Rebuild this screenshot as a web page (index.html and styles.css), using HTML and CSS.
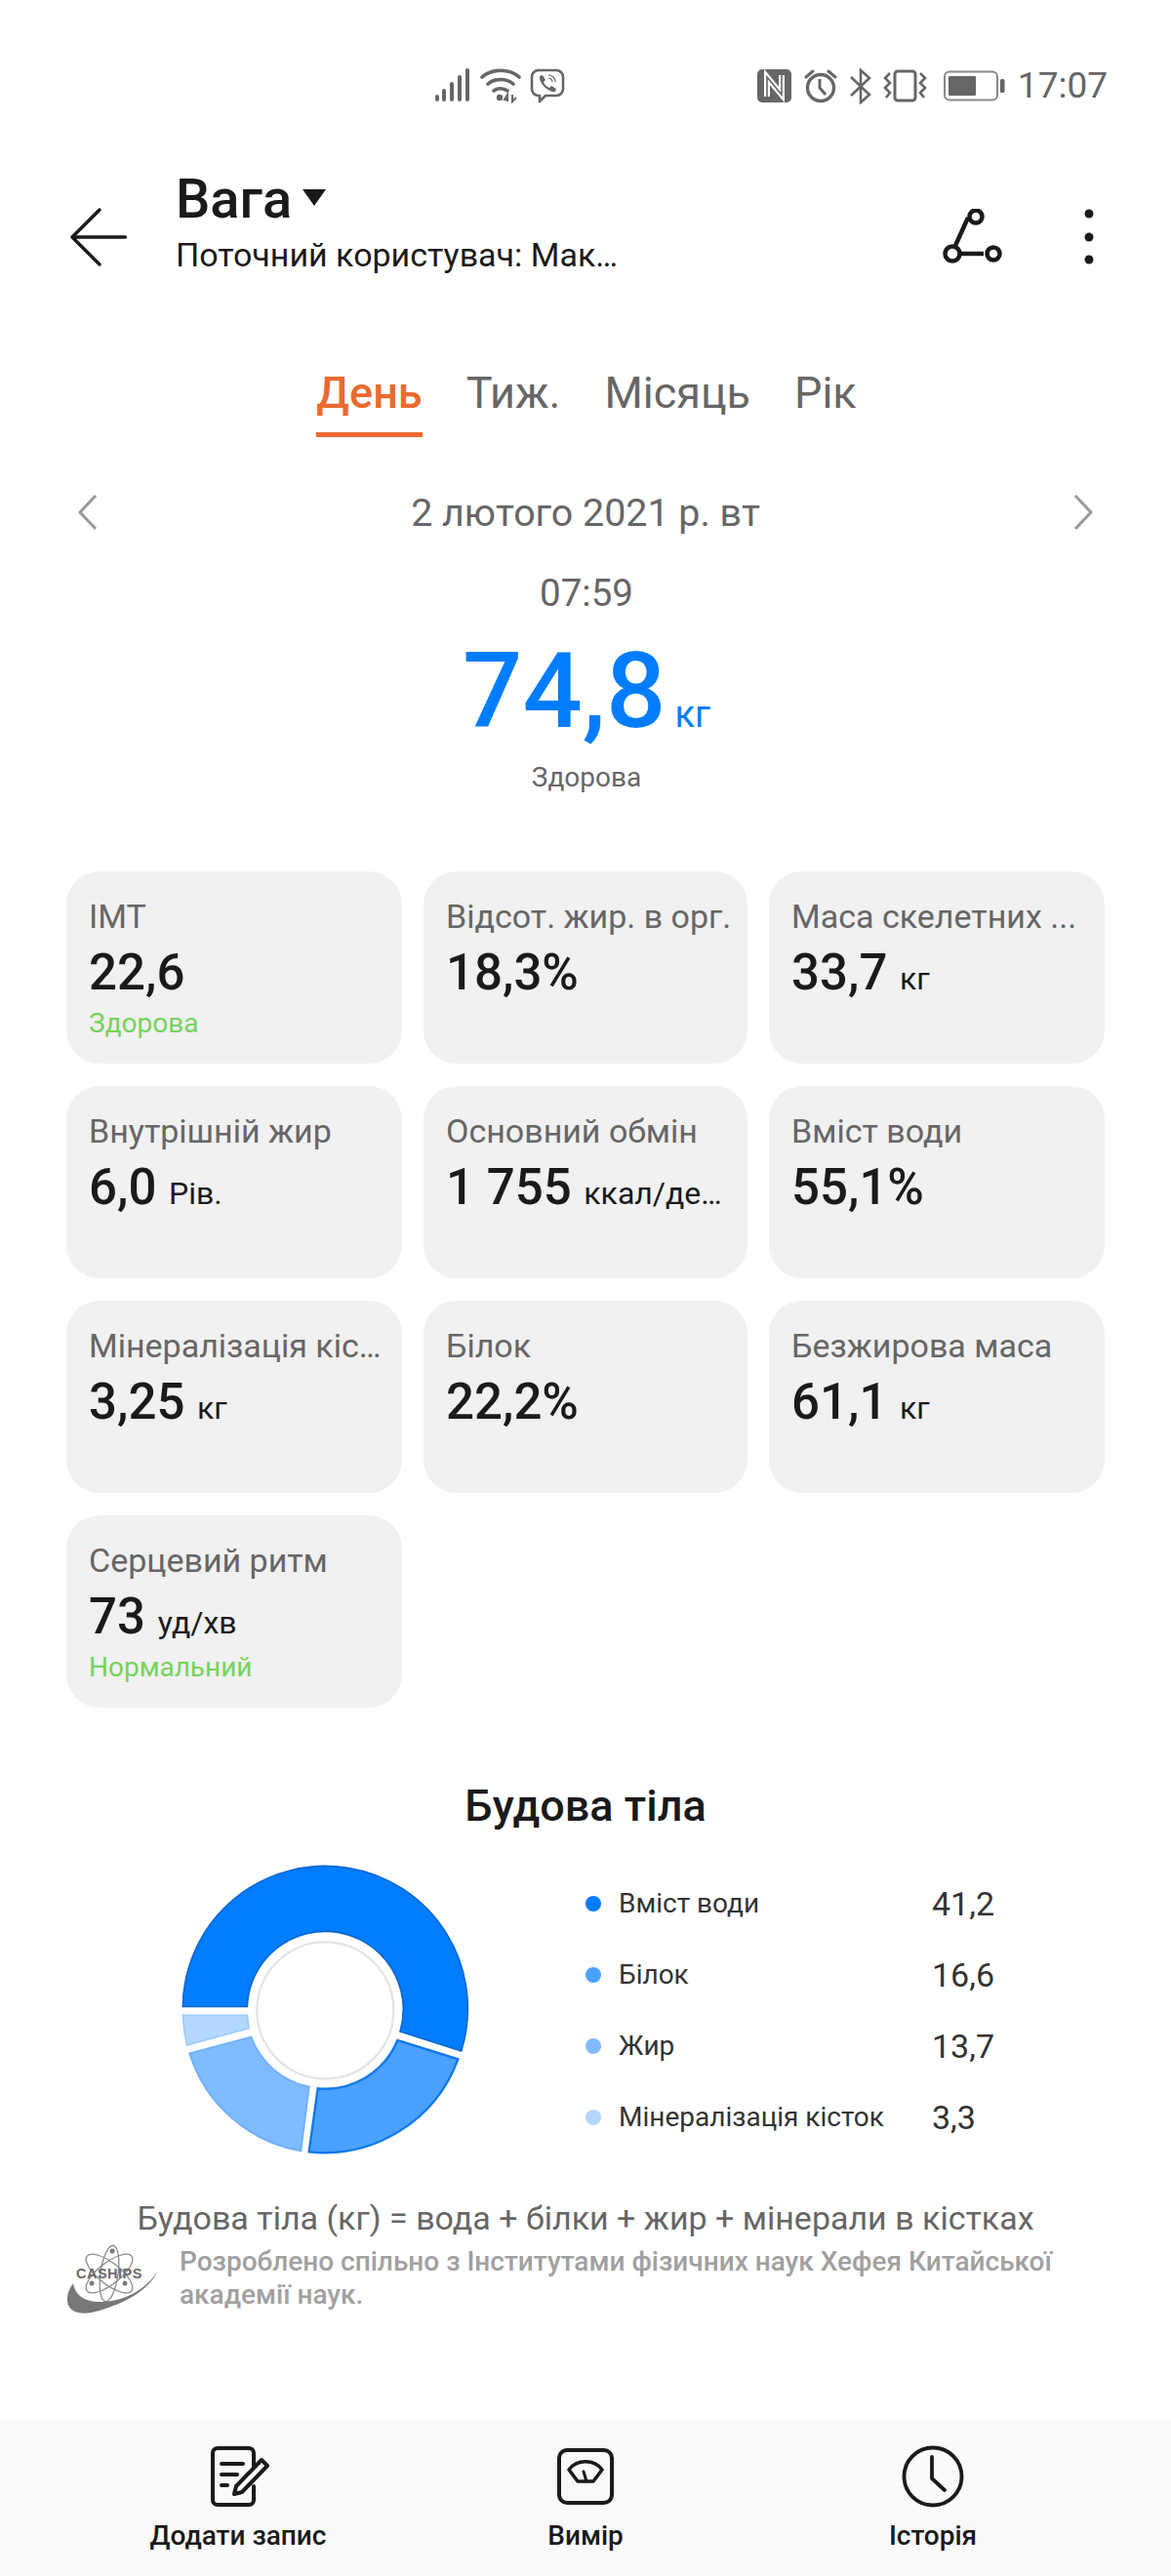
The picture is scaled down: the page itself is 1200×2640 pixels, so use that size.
FILE: index.html
```html
<!DOCTYPE html>
<html lang="uk">
<head>
<meta charset="utf-8">
<title>Вага</title>
<link rel="stylesheet" href="styles.css">
</head>
<body>
<div class="screen">
  <div class="status">
    <div class="status-left">
      <svg class="ic-signal" viewBox="0 0 40 38"><g fill="#666"><rect x="2" y="28" width="4" height="7" rx="2"/><rect x="9" y="22" width="4" height="13" rx="2"/><rect x="17" y="15" width="4" height="20" rx="2"/><rect x="25" y="8" width="4" height="27" rx="2"/><rect x="33" y="1" width="4" height="34" rx="2"/></g></svg>
      <svg class="ic-wifi" viewBox="0 0 42 38"><g fill="none" stroke="#666" stroke-width="3.6" stroke-linecap="round"><path d="M2 10C12 1 30 1 40 10"/><path d="M8 17C15 11 27 11 34 17"/><path d="M14 24C18 21 24 21 28 24"/></g><circle cx="20" cy="31" r="3.2" fill="#666"/><path d="M28 35v-7l-3 5h4M33 28v7l4-4" fill="none" stroke="#666" stroke-width="2"/></svg>
      <svg class="ic-viber" viewBox="0 0 36 37"><path d="M9 2H27C31 2 34 5 34 9V21C34 25 31 28 27 28H16L10 34V28H9C5 28 2 25 2 21V9C2 5 5 2 9 2Z" fill="none" stroke="#666" stroke-width="2.6" stroke-linejoin="round"/><path d="M10 8L13 7L16 12L14 14C15 17 17 19 20 20L22 18L27 21L26 24C20 25 9 16 10 8Z" fill="#666"/><path d="M19 7C23 7 26 10 26 14M19 10C21 10 23 12 23 14" fill="none" stroke="#666" stroke-width="1.2"/></svg>
    </div>
    <div class="status-right">
      <svg class="ic-nfc" viewBox="0 0 35 34"><rect width="35" height="34" rx="5" fill="#666"/><path d="M10 28V8L25 26V6" fill="none" stroke="#fff" stroke-width="6"/><path d="M10 28V8L25 26V6" fill="none" stroke="#666" stroke-width="1.6"/></svg>
      <svg class="ic-alarm" viewBox="0 0 34 36"><circle cx="17" cy="20" r="13.5" fill="none" stroke="#666" stroke-width="3.4"/><path d="M16 11V20L22 27" fill="none" stroke="#666" stroke-width="3"/><path d="M2 9L9 3M32 9L25 3" stroke="#666" stroke-width="3" stroke-linecap="round"/></svg>
      <svg class="ic-bt" viewBox="0 0 22 37"><path d="M1 9L20 27L11 35V2L20 10L1 28" fill="none" stroke="#666" stroke-width="2.6"/></svg>
      <svg class="ic-vib" viewBox="0 0 45 34"><rect x="12" y="2" width="21" height="30" rx="3" fill="none" stroke="#666" stroke-width="3"/><path d="M7 4L2 9L7 14L2 19L7 24L3 29M38 4L43 9L38 14L43 19L38 24L42 29" fill="none" stroke="#666" stroke-width="2.6"/></svg>
      <svg class="ic-batt" viewBox="0 0 64 32"><rect x="1" y="1.500" width="54" height="29" rx="5" fill="none" stroke="#888" stroke-width="2"/><rect x="5" y="6" width="28" height="20" rx="1" fill="#666"/><rect x="58" y="9" width="4.500" height="14" rx="1.500" fill="#666"/></svg>
      <span class="clock">17:07</span>
    </div>
  </div>

  <header class="topbar">
    <svg class="ic-back" viewBox="0 0 60 60"><path d="M57.500 30H3M31 2L3 30L31 58" fill="none" stroke="#1a1a1a" stroke-width="3.400" stroke-linecap="round" stroke-linejoin="round"/></svg>
    <div class="heading">
      <div class="title-row"><h1 class="title">Вага</h1><svg class="ic-caret" viewBox="0 0 24 18"><path d="M0 0H24L12 17Z" fill="#1a1a1a"/></svg></div>
      <p class="user">Поточний користувач: Мак…</p>
    </div>
    <svg class="ic-share" viewBox="0 0 64 56"><g fill="none" stroke="#1a1a1a" stroke-width="4.500"><path d="M26 9L12 40M19 46H42"/><circle cx="34" cy="8" r="6.500"/><circle cx="10" cy="46" r="7.500"/><circle cx="52" cy="46" r="6.500"/></g></svg>
    <svg class="ic-more" viewBox="0 0 10 58"><g fill="#1a1a1a"><circle cx="5" cy="5" r="4.500"/><circle cx="5" cy="29" r="4.500"/><circle cx="5" cy="52" r="4.500"/></g></svg>
  </header>

  <nav class="tabs">
    <span class="tab active">День</span>
    <span class="tab">Тиж.</span>
    <span class="tab">Місяць</span>
    <span class="tab">Рік</span>
  </nav>

  <div class="date-row">
    <svg class="ic-chev" viewBox="0 0 24 40"><path d="M20 3L4 20L20 37" fill="none" stroke="#999" stroke-width="3"/></svg>
    <span class="date">2 лютого 2021 р. вт</span>
    <svg class="ic-chev" viewBox="0 0 24 40"><path d="M4 3L20 20L4 37" fill="none" stroke="#999" stroke-width="3"/></svg>
  </div>

  <div class="reading">
    <div class="time">07:59</div>
    <div class="weight"><span class="weight-num">74,8</span><span class="weight-unit">кг</span></div>
    <div class="verdict">Здорова</div>
  </div>

  <section class="cards">
    <div class="card"><div class="label">ІМТ</div><div class="value">22,6</div><div class="note">Здорова</div></div>
    <div class="card"><div class="label">Відсот. жир. в орг.</div><div class="value">18,3%</div></div>
    <div class="card"><div class="label">Маса скелетних ...</div><div class="value">33,7 <small>кг</small></div></div>
    <div class="card"><div class="label">Внутрішній жир</div><div class="value">6,0 <small>Рів.</small></div></div>
    <div class="card"><div class="label">Основний обмін</div><div class="value">1 755 <small>ккал/де…</small></div></div>
    <div class="card"><div class="label">Вміст води</div><div class="value">55,1%</div></div>
    <div class="card"><div class="label">Мінералізація кіс…</div><div class="value">3,25 <small>кг</small></div></div>
    <div class="card"><div class="label">Білок</div><div class="value">22,2%</div></div>
    <div class="card"><div class="label">Безжирова маса</div><div class="value">61,1 <small>кг</small></div></div>
    <div class="card"><div class="label">Серцевий ритм</div><div class="value">73 <small>уд/хв</small></div><div class="note">Нормальний</div></div>
  </section>

  <h2 class="section-title">Будова тіла</h2>

  <section class="composition">
    <svg class="donut" viewBox="0 0 1020 1020">
      <path d="M82 493A438 438 0 1 1 938 630L750 570A240 240 0 1 0 280 493Z" fill="#007dff" stroke="#0a68d0" stroke-width="5"/>
      <path d="M928 655A438 438 0 0 1 470 940L497 745A240 240 0 0 0 742 597Z" fill="#4aa1ff" stroke="#0f78ea" stroke-width="7"/>
      <path d="M445 937A438 438 0 0 1 103 637L292 587A240 240 0 0 0 470 740Z" fill="#80bbff" stroke="#70b0fb" stroke-width="6"/>
      <path d="M95 612A438 438 0 0 1 82 520H280L285 560Z" fill="#b3d7ff" stroke="#9fcbfb" stroke-width="5"/>
      <circle cx="520" cy="505" r="210" fill="#fff" stroke="#e4e4e4" stroke-width="7"/>
    </svg>
    <ul class="legend">
      <li class="legend-row"><i class="dot dot-water"></i><span class="legend-name">Вміст води</span><span class="legend-val">41,2</span></li>
      <li class="legend-row"><i class="dot dot-protein"></i><span class="legend-name">Білок</span><span class="legend-val">16,6</span></li>
      <li class="legend-row"><i class="dot dot-fat"></i><span class="legend-name">Жир</span><span class="legend-val">13,7</span></li>
      <li class="legend-row"><i class="dot dot-mineral"></i><span class="legend-name">Мінералізація кісток</span><span class="legend-val">3,3</span></li>
    </ul>
  </section>

  <p class="formula">Будова тіла (кг) = вода + білки + жир + мінерали в кістках</p>

  <div class="credit">
    <div class="logo">
      <svg class="logo-art" viewBox="0 0 96 78">
        <g fill="none" stroke="#8a8a8a" stroke-width="1.300">
          <ellipse cx="44" cy="32" rx="9" ry="29" transform="rotate(8 44 32)"/>
          <ellipse cx="44" cy="32" rx="11" ry="29" transform="rotate(52 44 32)"/>
          <ellipse cx="44" cy="32" rx="11" ry="29" transform="rotate(-52 44 32)"/>
        </g>
        <g fill="#777"><circle cx="47" cy="9" r="2.500"/><circle cx="26" cy="42" r="2.500"/><circle cx="60" cy="42" r="2.500"/></g>
        <path d="M7 42C1 50 -1 60 3 66C8 74 20 74 34 70C60 62 84 50 93 30C82 48 60 60 38 61C22 62 9 56 7 42Z" fill="#777"/>
      </svg>
      <span class="logo-text">CASHIPS</span>
    </div>
    <p class="credit-text">Розроблено спільно з Інститутами фізичних наук Хефея Китайської академії наук.</p>
  </div>

  <footer class="actions">
    <div class="action">
      <svg class="ic-action" viewBox="0 0 64 64"><g fill="none" stroke="#1a1a1a" stroke-width="4" stroke-linecap="round" stroke-linejoin="round"><path d="M48 21V8C48 5 46 3 43 3H11C8 3 6 5 6 8V56C6 59 8 61 11 61H43C46 61 48 59 48 56V42"/><path d="M15 19H37M15 30H31M15 41H21"/><path d="M56 15L62 21L36 48L28 50L30 42Z" fill="#f9f9f9"/></g></svg>
      <span class="action-label">Додати запис</span>
    </div>
    <div class="action">
      <svg class="ic-action" viewBox="0 0 64 64"><g fill="none" stroke="#1a1a1a" stroke-width="4" stroke-linejoin="round" stroke-linecap="round"><rect x="5" y="5" width="54" height="54" rx="8"/><path d="M15 25C23 14 41 14 49 25L40 37H24Z" stroke-width="3.600"/><path d="M30 27L33 37" stroke-width="3"/></g></svg>
      <span class="action-label">Вимір</span>
    </div>
    <div class="action">
      <svg class="ic-action" viewBox="0 0 64 64"><g fill="none" stroke="#1a1a1a" stroke-width="3.800" stroke-linecap="round" stroke-linejoin="round"><circle cx="32" cy="32" r="29.500"/><path d="M31 12V34L44 46"/></g></svg>
      <span class="action-label">Історія</span>
    </div>
  </footer>
</div>
</body>
</html>
```

FILE: styles.css
```css
* { box-sizing: border-box; }

html, body { margin: 0; padding: 0; background: #fff; }

body {
  font-family: Roboto, "Noto Sans", sans-serif;
  color: #1a1a1a;
}

.screen {
  width: 1200px;
  height: 2640px;
  display: flex;
  flex-direction: column;
  overflow: hidden;
}

/* Status bar */
.status {
  height: 120px;
  flex: none;
  padding: 68px 65px 0 444px;
  display: flex;
  justify-content: space-between;
  align-items: flex-start;
}
.status-left, .status-right { display: flex; align-items: center; height: 40px; }
.status-left svg, .status-right svg { display: block; flex: none; }
.ic-signal { width: 40px; height: 38px; }
.ic-wifi { width: 42px; height: 38px; margin-left: 8px; }
.ic-viber { width: 36px; height: 37px; margin-left: 9px; }
.ic-nfc { width: 35px; height: 34px; }
.ic-alarm { width: 34px; height: 36px; margin-left: 13px; }
.ic-bt { width: 22px; height: 37px; margin-left: 13px; }
.ic-vib { width: 45px; height: 34px; margin-left: 12px; }
.ic-batt { width: 64px; height: 32px; margin-left: 17px; }
.clock { font-size: 37px; color: #666; margin-left: 12px; line-height: 40px; }

/* Title bar */
.topbar {
  height: 178px;
  flex: none;
  padding-left: 71px;
  display: flex;
  align-items: flex-start;
}
.ic-back { width: 60px; height: 60px; margin-top: 93px; flex: none; }
.heading { margin-left: 49px; width: 760px; padding-top: 52px; flex: none; }
.title-row { display: flex; align-items: flex-start; }
.title { margin: 0; font-size: 56px; font-weight: 500; line-height: 64px; }
.ic-caret { width: 24px; height: 18px; margin: 22px 0 0 11px; }
.user { margin: 3px 0 0; font-size: 34px; line-height: 44px; color: #1a1a1a; }
.ic-share { width: 64px; height: 56px; margin: 94px 0 0 26px; flex: none; }
.ic-more { width: 10px; height: 58px; margin: 94px 0 0 81px; flex: none; }

/* Period tabs */
.tabs {
  flex: none;
  display: flex;
  justify-content: center;
  gap: 45px;
  height: 202px;
  padding-top: 75px;
  padding-left: 2px;
}
.tab {
  font-size: 45px;
  line-height: 60px;
  height: 75px;
  color: #666;
}
.tab.active {
  color: #ea6a2f;
  font-weight: 500;
  border-bottom: 5px solid #ea6a2f;
}

/* Date selector */
.date-row {
  flex: none;
  height: 50px;
  padding: 0 78px;
  display: flex;
  justify-content: space-between;
  align-items: center;
}
.ic-chev { width: 24px; height: 40px; }
.date { font-size: 39.4px; color: #666; }

/* Latest reading */
.reading { flex: none; text-align: center; padding-left: 2px; }
.time { font-size: 38.5px; color: #666; line-height: 44px; margin-top: 36px; }
.weight { height: 122px; line-height: 122px; white-space: nowrap; margin-top: 17px; color: #007dff; }
.weight-num { font-size: 108px; font-weight: 500; }
.weight-unit { font-size: 38px; margin-left: 9px; }
.verdict { font-size: 28px; color: #666; line-height: 36px; margin-top: 10px; }

/* Metric cards */
.cards {
  flex: none;
  margin: 78px 68px 0;
  display: grid;
  grid-template-columns: 344px 332px 344px;
  grid-auto-rows: 197px;
  gap: 23px 22px;
}
.card {
  background: #f1f1f1;
  border-radius: 34px;
  padding: 24px 10px 0 23px;
}
.label {
  font-size: 34px;
  line-height: 44px;
  color: #666;
  white-space: nowrap;
}
.value {
  font-size: 51px;
  font-weight: 500;
  line-height: 62px;
  margin-top: 5px;
  height: 62px;
  white-space: nowrap;
}
.value small { font-size: 32px; font-weight: 400; line-height: 1; }
.note { font-size: 28px; line-height: 36px; color: #76d35c; margin-top: 3px; }

/* Body composition */
.section-title {
  flex: none;
  margin: 73px 0 0;
  text-align: center;
  font-size: 45px;
  font-weight: 500;
  line-height: 56px;
}
.composition {
  flex: none;
  margin-top: 13px;
  padding-left: 160px;
  display: flex;
  align-items: flex-start;
  height: 340px;
}
.donut { width: 340px; height: 340px; flex: none; }
.legend {
  list-style: none;
  margin: 22px 0 0 100px;
  padding: 0;
  width: 460px;
}
.legend-row { display: flex; align-items: center; height: 73px; }
.dot { width: 16px; height: 16px; border-radius: 50%; flex: none; }
.dot-water { background: #007dff; }
.dot-protein { background: #4aa1ff; }
.dot-fat { background: #80bbff; }
.dot-mineral { background: #b3d7ff; }
.legend-name { font-size: 28px; color: #333; margin-left: 18px; width: 321px; white-space: nowrap; }
.legend-val { font-size: 34px; color: #333; }

.formula {
  flex: none;
  margin: 19px 0 0;
  text-align: center;
  font-size: 34px;
  line-height: 44px;
  color: #666;
}
.credit {
  flex: none;
  display: flex;
  padding-left: 68px;
  height: 84px;
}
.logo { position: relative; width: 96px; height: 78px; flex: none; margin-top: 3px; }
.logo-art { display: block; width: 96px; height: 78px; }
.logo-text {
  position: absolute;
  left: 10px;
  top: 24px;
  font-family: "Liberation Sans", sans-serif;
  font-size: 14.5px;
  line-height: 16px;
  font-weight: 700;
  letter-spacing: 0.5px;
  color: #6a6a6a;
}
.credit-text {
  margin: 6px 0 0 20px;
  width: 940px;
  font-size: 28px;
  line-height: 34px;
  font-weight: 500;
  color: #a0a0a0;
}

/* Bottom actions */
.actions {
  flex: none;
  margin-top: auto;
  height: 160px;
  background: #f9f9f9;
  display: grid;
  grid-template-columns: 488px 224px 488px;
  justify-items: center;
  padding-top: 26px;
}
.action { display: flex; flex-direction: column; align-items: center; }
.ic-action { width: 64px; height: 64px; display: block; }
.action-label { font-size: 28px; font-weight: 500; line-height: 36px; margin-top: 11px; white-space: nowrap; }
```
